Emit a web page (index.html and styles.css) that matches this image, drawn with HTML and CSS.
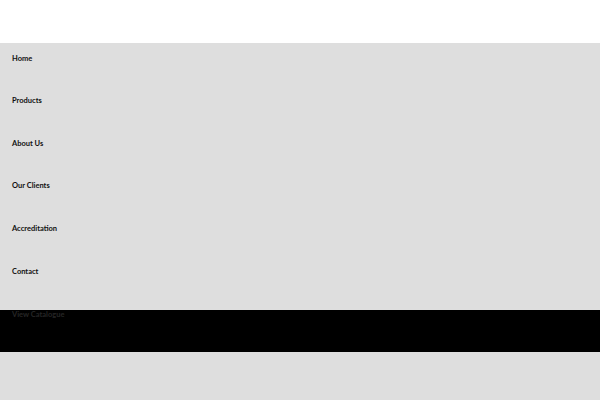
FILE: index.html
```html
<!DOCTYPE html>
<html>
<head>
<meta charset="utf-8">
<link rel="stylesheet" href="styles.css">
</head>
<body>
<header class="top"></header>
<nav class="menu">
  <ul class="menu-list">
    <li class="menu-item"><a href="#">Home</a></li>
    <li class="menu-item"><a href="#">Products</a></li>
    <li class="menu-item"><a href="#">About Us</a></li>
    <li class="menu-item"><a href="#">Our Clients</a></li>
    <li class="menu-item"><a href="#">Accreditation</a></li>
    <li class="menu-item"><a href="#">Contact</a></li>
  </ul>
  <div class="cta-gap"></div>
  <div class="cta"><a href="#">View Catalogue</a></div>
</nav>
</body>
</html>
```
FILE: styles.css
```css
html, body {
  margin: 0;
  padding: 0;
  height: 100%;
}
body {
  background: #dedede;
  font-family: Lato, "Open Sans", sans-serif;
  font-size: 7.5px;
  font-weight: 700;
}
.top {
  height: 43px;
  background: #ffffff;
}
.menu {
  background: #dedede;
}
.menu-list {
  list-style: none;
  margin: 0;
  padding: 0;
}
.menu-item {
  height: 42.67px;
  box-sizing: border-box;
  padding: 10.5px 0 0 12px;
  line-height: 10px;
}
.menu-item a {
  color: #111111;
  text-decoration: none;
}
.cta-gap {
  height: 11px;
}
.cta {
  background: #000000;
  height: 42px;
  box-sizing: border-box;
  padding: 0 0 0 12px;
  line-height: 10px;
}
.cta a {
  color: #262626;
  text-decoration: none;
}
```
